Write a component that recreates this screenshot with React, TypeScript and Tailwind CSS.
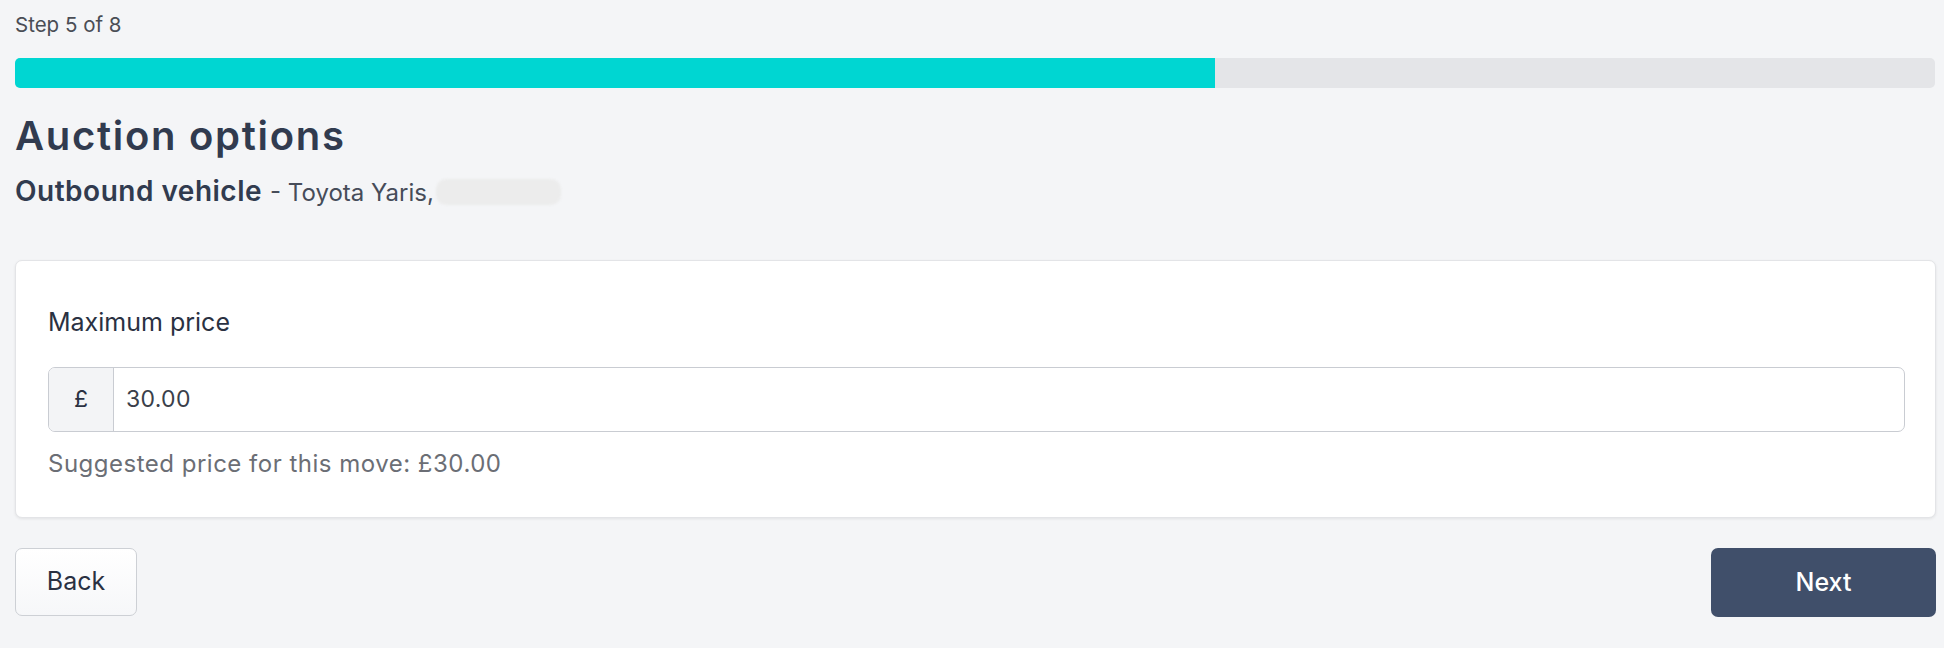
import React from "react";

export default function App() {
  return (
    <div className="min-h-[648px] bg-[#f4f5f7] pl-[15px] pr-[8px] pt-[11px] font-['Inter',sans-serif]">
      <div className="text-[20.5px] leading-[28px] text-[#4a4d55]">Step 5 of 8</div>
      <div className="mt-[19px] mr-[1px] h-[30px] rounded-[5px] bg-[#e4e5e8] overflow-hidden">
        <div className="h-full w-[62.5%] bg-[#00d6d2]" />
      </div>
      <h1 className="mt-[25px] text-[40px] leading-[46px] font-semibold tracking-[1.7px] text-[#313b4f]">Auction options</h1>
      <div className="mt-[15px] flex items-baseline text-[28px] leading-[34px] text-[#313b4f]">
        <span className="font-semibold tracking-[0.5px]">Outbound vehicle</span>
        <span className="ml-[8px] text-[24px] text-[#464c59]">- Toyota Yaris,</span>
        <span className="ml-[2px] inline-block h-[26px] w-[125px] self-center rounded-[10px] bg-[#ececec] blur-[1px]" />
      </div>
      <div className="mt-[50px] rounded-[7px] border border-[#e3e4e7] bg-white pt-[45px] pb-[38px] pl-[32px] pr-[30px] shadow-[0_1px_3px_rgba(0,0,0,0.08)]">
        <div className="text-[25px] leading-[32px] text-[#2a3142]">Maximum price</div>
        <div className="mt-[29px] flex h-[65px] rounded-[7px] border-[1.5px] border-[#c9ccd2] overflow-hidden">
          <div className="flex w-[65px] items-center justify-center border-r-[1.5px] border-[#c9ccd2] bg-[#f3f4f6] text-[23px] text-[#2a3142]">£</div>
          <div className="flex flex-1 items-center pl-[12px] text-[23px] tracking-[0.3px] text-[#3a3f4a]">30.00</div>
        </div>
        <div className="mt-[17px] text-[24px] leading-[30px] tracking-[0.5px] text-[#6b6e75]">Suggested price for this move: £30.00</div>
      </div>
      <div className="mt-[30px] flex items-start justify-between">
        <button className="h-[68px] w-[122px] rounded-[7px] border border-[#cdd0d5] bg-gradient-to-b from-white to-[#f6f7f9] text-[25px] text-[#2a3142]">Back</button>
        <button className="h-[69px] w-[225px] rounded-[7px] bg-[#404f6a] text-[25px] font-medium text-white">Next</button>
      </div>
    </div>
  );
}
